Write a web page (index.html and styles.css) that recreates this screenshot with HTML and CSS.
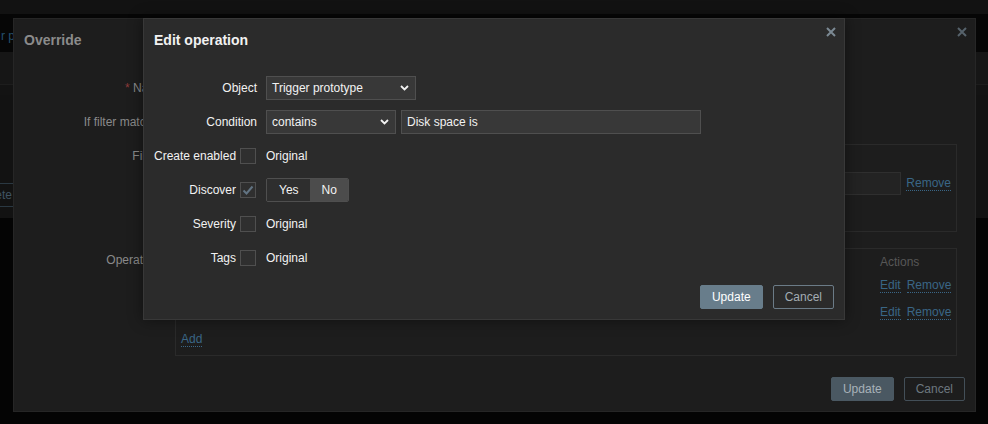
FILE: index.html
```html
<!DOCTYPE html>
<html>
<head>
<meta charset="utf-8">
<link rel="stylesheet" href="styles.css">
</head>
<body>
<div class="page">
  <div class="bg-top"></div>
  <div class="bg-head"><span class="bg-link">r p</span></div>
  <div class="bg-row"></div>
  <div class="bg-area"><span class="bg-btn"><span>ete</span></span></div>
</div>

<div class="dialog override">
  <div class="dlg-header">
    <h4 class="dlg-title ov-title">Override</h4>
    <span class="close ov-close"><svg width="10" height="10" viewBox="0 0 10 10"><path d="M1 1L9 9M9 1L1 9" stroke="#56626b" stroke-width="2"/></svg></span>
  </div>
  <div class="ov-form">
    <div class="ov-label"><span class="req">*</span> Name</div>
    <div class="ov-ctrl"><div class="ov-input"></div></div>
    <div class="ov-label">If filter matches</div>
    <div class="ov-ctrl"><div class="ov-input"></div></div>
    <div class="ov-label">Filters</div>
    <div class="ov-box filters">
      <div class="filter-head"></div>
      <div class="filter-row">
        <div class="ov-input wide"></div>
        <span class="ov-link">Remove</span>
      </div>
    </div>
    <div class="ov-label ops-label">Operations</div>
    <div class="ov-box ops">
      <div class="ops-head"><span class="ops-actions">Actions</span></div>
      <div class="ops-row"><span class="ops-actions"><span class="ov-link">Edit</span><span class="ov-link">Remove</span></span></div>
      <div class="ops-row"><span class="ops-actions"><span class="ov-link">Edit</span><span class="ov-link">Remove</span></span></div>
      <div class="ops-row"><span class="ov-link">Add</span></div>
    </div>
  </div>
  <div class="dlg-footer">
    <span class="btn ov-primary">Update</span>
    <span class="btn ov-secondary">Cancel</span>
  </div>
</div>

<div class="dialog editop">
  <div class="dlg-header">
    <h4 class="dlg-title">Edit operation</h4>
    <span class="close ed-close"><svg width="10" height="10" viewBox="0 0 10 10"><path d="M1 1L9 9M9 1L1 9" stroke="#7b8993" stroke-width="2"/></svg></span>
  </div>
  <div class="ed-form">
    <div class="ed-label">Object</div>
    <div class="ed-ctrl">
      <div class="select sel-object"><span>Trigger prototype</span><svg width="9" height="6" viewBox="0 0 9 6"><path d="M1 1L4.5 4.5L8 1" stroke="#f2f2f2" stroke-width="1.8" fill="none"/></svg></div>
    </div>
    <div class="ed-label">Condition</div>
    <div class="ed-ctrl">
      <div class="select sel-cond"><span>contains</span><svg width="9" height="6" viewBox="0 0 9 6"><path d="M1 1L4.5 4.5L8 1" stroke="#f2f2f2" stroke-width="1.8" fill="none"/></svg></div>
      <div class="textbox">Disk space is</div>
    </div>
    <div class="ed-label">Create enabled <span class="checkbox"></span></div>
    <div class="ed-ctrl">Original</div>
    <div class="ed-label">Discover <span class="checkbox checked"><svg width="14" height="14" viewBox="0 0 14 14"><path d="M2.5 7.5L5.5 10.5L11.5 3.5" stroke="#627483" stroke-width="2" fill="none"/></svg></span></div>
    <div class="ed-ctrl">
      <div class="segmented"><span class="seg">Yes</span><span class="seg on">No</span></div>
    </div>
    <div class="ed-label">Severity <span class="checkbox"></span></div>
    <div class="ed-ctrl">Original</div>
    <div class="ed-label">Tags <span class="checkbox"></span></div>
    <div class="ed-ctrl">Original</div>
  </div>
  <div class="dlg-footer">
    <span class="btn primary">Update</span>
    <span class="btn secondary">Cancel</span>
  </div>
</div>
</body>
</html>
```

FILE: styles.css
```css
* { box-sizing: border-box; }
html, body {
  margin: 0;
  padding: 0;
  width: 988px;
  height: 424px;
  overflow: hidden;
  background: #040404;
  font-family: "Liberation Sans", Arial, sans-serif;
  font-size: 12px;
}

/* background page */
.page { width: 988px; height: 424px; }
.bg-top { height: 14px; background: #121212; }
.bg-head { height: 38px; background: #060606; padding-top: 15px; }
.bg-link { display: block; color: #24506e; line-height: 14px; margin-left: 1px; }
.bg-row { height: 33px; background: #161616; border-bottom: 1px solid #1d1d1d; }
.bg-area { height: 133px; background: #121212; border-top: 10px solid #131313; padding-top: 88px; }
.bg-btn {
  display: flex; justify-content: flex-end; width: 14px; height: 24px;
  border: 1px solid #2a3842; border-left: none;
  color: #3f5362; line-height: 22px; overflow: hidden; white-space: nowrap;
}
.bg-btn span { flex: none; padding-right: 1px; }

/* dialogs */
.dialog {
  position: absolute;
  display: flex;
  flex-direction: column;
}
.override {
  left: 13px; top: 18px; width: 963px; height: 394px;
  background: #1d1d1d;
  border: 1px solid #262626;
}
.editop {
  left: 143px; top: 18px; width: 702px; height: 302px;
  background: #2b2b2b;
  border: 1px solid #383838;
  box-shadow: 0 0 14px rgba(0,0,0,0.45);
}
.dlg-header { position: relative; padding: 14px 10px 0; height: 57px; }
.dlg-title {
  margin: 0; font-size: 14px; line-height: 14px; font-weight: bold; color: #f2f2f2;
}
.ov-title { color: #8b8b8b; }
.close { position: absolute; top: 8px; right: 8px; width: 10px; height: 10px; display: block; }
.close svg { display: block; }
.dlg-footer {
  margin-top: auto;
  display: flex; justify-content: flex-end; gap: 10px;
  padding: 0 10px 10px;
}
.btn {
  display: block; height: 24px; line-height: 22px; padding: 0 11px;
  border: 1px solid transparent; border-radius: 2px; white-space: nowrap;
}
.primary { background: #687d8b; border-color: #687d8b; color: #ffffff; }
.secondary { border-color: #6b7b87; color: #a3adb4; }
.ov-primary { background: #4a5862; border-color: #4a5862; color: #a8b2b9; }
.ov-secondary { border-color: #434f58; color: #6c777f; }

/* override form */
.ov-form {
  display: grid;
  grid-template-columns: 141px 782px;
  column-gap: 10px;
  row-gap: 10px;
  padding: 0 10px;
  align-items: start;
}
.ov-label { text-align: right; line-height: 24px; color: #8a8a8a; white-space: nowrap; }
.req { color: #8c3b3b; }
.ov-ctrl { height: 24px; }
.ov-input { height: 24px; width: 300px; background: #232323; border: 1px solid #2f2f2f; }
.ov-box { border: 1px solid #2a2a2a; padding: 4px 5px; }
.filters { height: 88px; }
.filter-head { height: 23px; }
.filter-row { display: flex; justify-content: flex-end; align-items: center; gap: 5px; }
.ov-input.wide { width: 400px; height: 23px; }
.ov-link { color: #3a6686; border-bottom: 1px dotted #3a6686; line-height: 13px; }
.ops-label, .ops { margin-top: 6px; }
.ops { height: 108px; padding-top: 5px; }
.ops-head { height: 18px; line-height: 17px; color: #585858; position: relative; }
.ops-row { height: 27px; line-height: 27px; position: relative; }
.ops-actions { position: absolute; left: 699px; top: 0; white-space: nowrap; display: flex; gap: 6px; }
.ops-row .ops-actions { align-items: center; height: 27px; }
.ops-head .ops-actions { color: #575757; }

/* edit operation form */
.ed-form {
  display: grid;
  grid-template-columns: 103px 1fr;
  column-gap: 9px;
  row-gap: 10px;
  padding: 0 10px;
  color: #f2f2f2;
}
.ed-label {
  display: flex; justify-content: flex-end; align-items: center; gap: 4px;
  height: 24px; white-space: nowrap;
}
.ed-ctrl { display: flex; align-items: center; gap: 5px; height: 24px; }
.select {
  display: flex; justify-content: space-between; align-items: center;
  height: 24px; background: #383838; border: 1px solid #4f4f4f;
  padding: 0 6px 0 5px; color: #f2f2f2;
}
.select svg { display: block; }
.sel-object { width: 150px; }
.sel-cond { width: 130px; }
.textbox {
  width: 300px; height: 24px; line-height: 22px; padding: 0 5px;
  background: #383838; border: 1px solid #4f4f4f; color: #f2f2f2;
}
.checkbox {
  display: flex; align-items: center; justify-content: center;
  width: 16px; height: 16px; border: 1px solid #4f4f4f; background: #2f2f2f;
  margin-right: 1px;
}
.checkbox svg { display: block; }
.segmented { display: flex; height: 24px; border: 1px solid #4f4f4f; border-radius: 2px; overflow: hidden; }
.seg { display: block; line-height: 22px; padding: 0 11px 0 12px; background: #2e2e2e; color: #f2f2f2; }
.seg.on { background: #4c4c4c; }
```
